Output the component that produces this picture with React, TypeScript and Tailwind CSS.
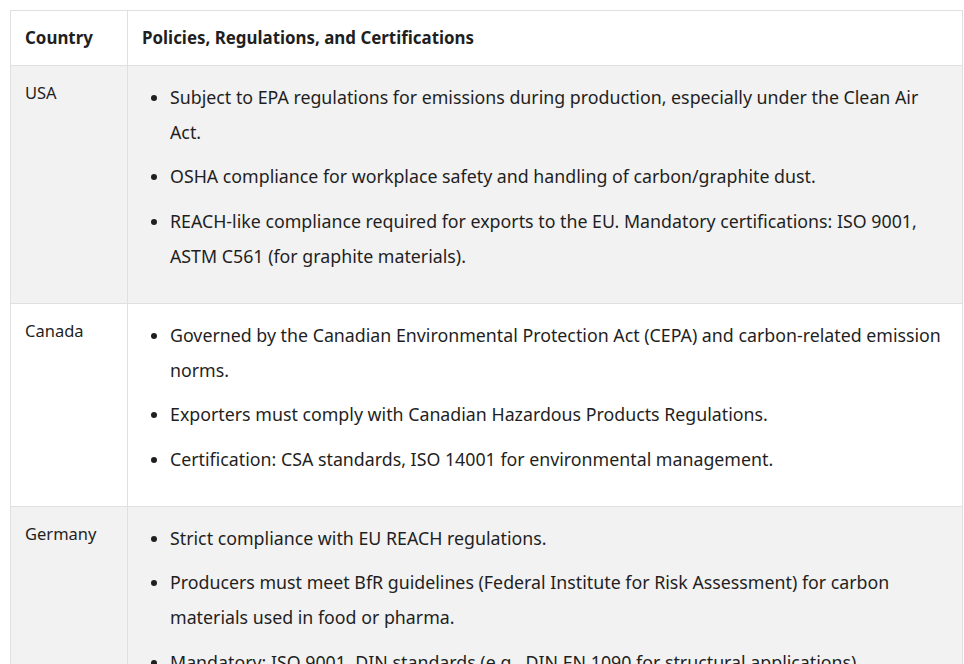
const rows = [
  {
    country: "USA",
    bg: "bg-[#f2f2f2]",
    items: [
      "Subject to EPA regulations for emissions during production, especially under the Clean Air Act.",
      "OSHA compliance for workplace safety and handling of carbon/graphite dust.",
      "REACH-like compliance required for exports to the EU. Mandatory certifications: ISO 9001, ASTM C561 (for graphite materials).",
    ],
  },
  {
    country: "Canada",
    bg: "bg-white",
    items: [
      "Governed by the Canadian Environmental Protection Act (CEPA) and carbon-related emission norms.",
      "Exporters must comply with Canadian Hazardous Products Regulations.",
      "Certification: CSA standards, ISO 14001 for environmental management.",
    ],
  },
  {
    country: "Germany",
    bg: "bg-[#f2f2f2]",
    items: [
      "Strict compliance with EU REACH regulations.",
      "Producers must meet BfR guidelines (Federal Institute for Risk Assessment) for carbon materials used in food or pharma.",
      "Mandatory: ISO 9001, DIN standards (e.g., DIN EN 1090 for structural applications).",
    ],
  },
];

export default function App() {
  return (
    <div className="h-[664px] overflow-hidden bg-white pl-[10px] pt-[10px] font-['Noto_Sans',sans-serif] text-[#1f1f1f]">
      <table className="w-[953px] border-collapse border border-[#e0e0e0]">
        <thead>
          <tr className="bg-white">
            <th className="w-[117px] border border-[#e0e0e0] px-[14px] py-[14px] text-left text-[16.9px] font-bold leading-[26px]">
              Country
            </th>
            <th className="border border-[#e0e0e0] px-[14px] py-[14px] text-left text-[16.9px] font-bold leading-[26px]">
              Policies, Regulations, and Certifications
            </th>
          </tr>
        </thead>
        <tbody>
          {rows.map((row) => (
            <tr key={row.country} className={row.bg}>
              <td className="border border-[#e0e0e0] px-[14px] py-[14px] align-top text-[16.5px] leading-[26px]">
                {row.country}
              </td>
              <td className="border border-[#e0e0e0] px-[14px] pb-[14px] pt-[13.5px] align-top">
                <ul className="mb-[15.5px] list-disc pl-[28px] text-[17.8px] leading-[35px]">
                  {row.items.map((item) => (
                    <li key={item} className="mb-[9.5px] last:mb-0">
                      {item}
                    </li>
                  ))}
                </ul>
              </td>
            </tr>
          ))}
        </tbody>
      </table>
    </div>
  );
}
